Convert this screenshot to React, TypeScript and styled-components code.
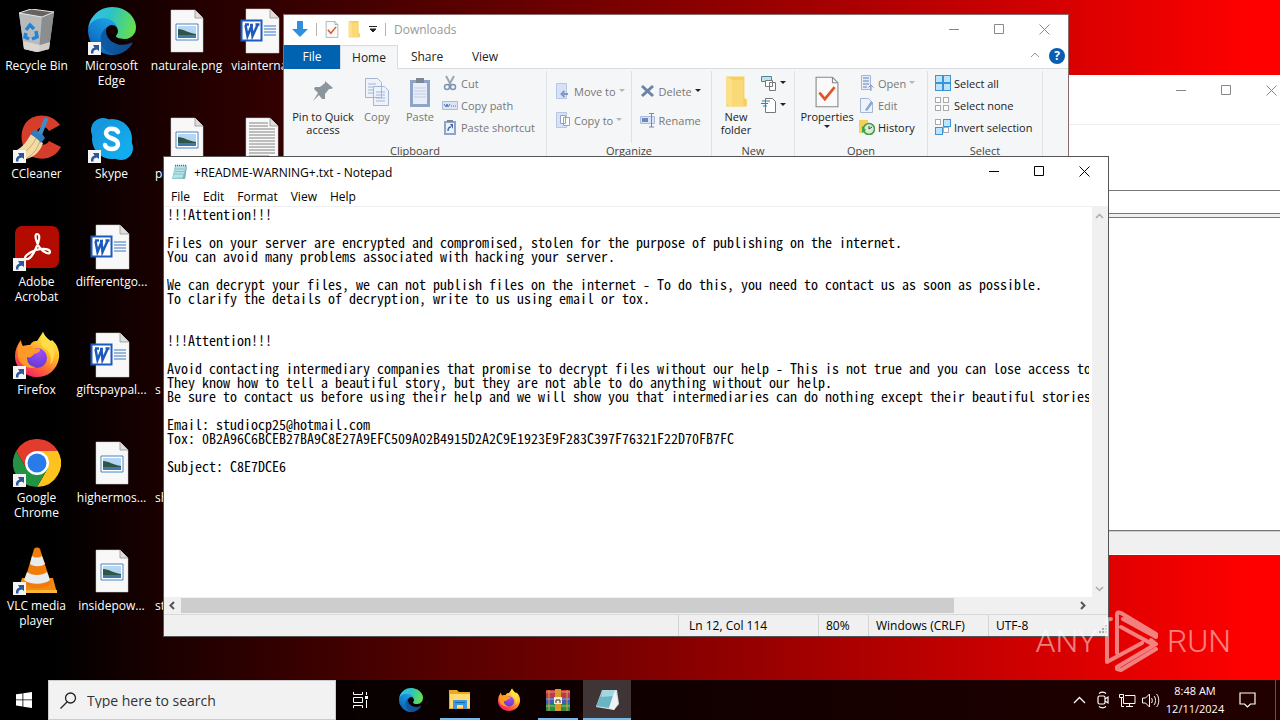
import React, { useId } from "react";
import styled, { createGlobalStyle } from "styled-components";

const ui = `"Open Sans", "Noto Sans", sans-serif`;

const Global = createGlobalStyle`
  * { box-sizing: border-box; }
  body { margin: 0; overflow: hidden; font: 12px/15px ${ui}; color: #000; }
  button, input, textarea { font: inherit; color: inherit; margin: 0; padding: 0; border: 0; background: none; border-radius: 0; outline: none; }
  svg { display: block; flex: none; }
`;

const Screen = styled.main`
  display: flex;
  flex-direction: column;
  height: 100vh;
  background: linear-gradient(90deg, #000 0, #000 4%, #1c0000 13%, #f00 98%);
`;
const Desktop = styled.section`
  position: relative;
  flex: 1;
  min-height: 0;
  overflow: hidden;
`;

/* ---------- desktop shortcuts ---------- */
const IconGrid = styled.div`
  display: grid;
  grid-auto-flow: column;
  grid-template-rows: repeat(6, 108px);
  grid-auto-columns: 75px;
  justify-content: start;
  margin-left: -1px;
  padding-top: 6px;
`;
const Shortcut = styled.button`
  display: flex;
  flex-direction: column;
  align-items: center;
  color: #fff;
  font-size: 12px;
  line-height: 15px;
  text-shadow: 0 1px 2px #000;
`;
const Picture = styled.span`
  position: relative;
  display: grid;
  place-items: center;
  width: 48px;
  height: 50px;
  margin-bottom: 2px;
`;
const Arrow = styled.svg`
  position: absolute;
  left: 0;
  bottom: 1px;
`;
const DocArt = styled.svg`
  overflow: visible;
`;
const Label = styled.span<{ $cut?: boolean }>`
  width: 75px;
  padding-left: ${(p) => (p.$cut ? 6 : 0)}px;
  text-align: ${(p) => (p.$cut ? "left" : "center")};
`;

/* ---------- windows ---------- */
const Frame = styled.article<{ $x: number; $y: number; $w: number; $h: number; $edge: string }>`
  position: absolute;
  left: ${(p) => p.$x}px;
  top: ${(p) => p.$y}px;
  width: ${(p) => p.$w}px;
  height: ${(p) => p.$h}px;
  display: flex;
  flex-direction: column;
  background: #fff;
  border: 1px solid ${(p) => p.$edge};
  overflow: hidden;
`;
const TitleBar = styled.header<{ $muted?: boolean }>`
  display: flex;
  align-items: center;
  height: 30px;
  flex: none;
  padding: 0 1px ${(p) => (p.$muted ? 2 : 0)}px 8px;
  gap: ${(p) => (p.$muted ? 8 : 6)}px;
  color: ${(p) => (p.$muted ? "#999" : "#000")};
`;
const WindowButtons = styled.div`
  display: flex;
  align-self: flex-start;
  margin-left: auto;
`;
const WindowButton = styled.button`
  display: grid;
  place-items: center;
  width: 45px;
  height: 29px;
`;

const QuickTools = styled.div`
  display: flex;
  align-items: center;
  gap: 8px;
`;
const Rule = styled.span`
  width: 1px;
  height: 13px;
  background: #b5b5b5;
`;
const Tabs = styled.nav`
  display: flex;
  height: 24px;
  flex: none;
  border-bottom: 1px solid #dadbdc;
`;
const Tab = styled.button<{ $kind?: "file" | "open" }>`
  width: ${(p) => (p.$kind === "file" ? 56 : 58)}px;
  height: 24px;
  color: ${(p) => (p.$kind === "file" ? "#fff" : "#222")};
  background: ${(p) => (p.$kind === "file" ? "#0063b1" : p.$kind === "open" ? "#f5f6f7" : "none")};
  border: ${(p) => (p.$kind === "open" ? "1px solid #dadbdc" : "0")};
  border-bottom: 0;
  line-height: 22px;
`;
const TabsEnd = styled.div`
  display: flex;
  align-items: center;
  gap: 9px;
  margin-left: auto;
  padding: 0 3px 2px 0;
`;
const Help = styled.button`
  width: 16px;
  height: 16px;
  border-radius: 8px;
  background: #0a5eb0;
  color: #fff;
  font-weight: 700;
  line-height: 16px;
`;
const Ribbon = styled.div`
  display: flex;
  flex: 1;
  background: #f5f6f7;
`;
const Group = styled.section<{ $w: number }>`
  display: flex;
  flex-direction: column;
  width: ${(p) => p.$w}px;
  height: 92px;
  margin-top: 2px;
  border-right: 1px solid #dfe2e5;
`;
const GroupBody = styled.div<{ $pad?: number; $gap?: number }>`
  display: flex;
  height: 72px;
  padding-left: ${(p) => p.$pad ?? 7}px;
  gap: ${(p) => p.$gap ?? 0}px;
`;
const GroupName = styled.div`
  text-align: center;
  font-size: 11px;
  color: #444;
`;
const BigTool = styled.button<{ $w: number; $off?: boolean }>`
  display: flex;
  flex-direction: column;
  align-items: center;
  width: ${(p) => p.$w}px;
  padding-top: 5px;
  gap: 2px;
  font-size: 11px;
  line-height: 13px;
  color: ${(p) => (p.$off ? "#777" : "#222")};
`;
const Stack = styled.div<{ $loose?: boolean; $line?: boolean }>`
  display: flex;
  flex-direction: column;
  padding: ${(p) => (p.$loose ? "9px 6px 0 8px" : "1px 0 0 1px")};
  gap: ${(p) => (p.$loose ? 7 : 0)}px;
  border-right: ${(p) => (p.$line ? "1px solid #dfe2e5" : "0")};
`;
const Tool = styled.button<{ $off?: boolean }>`
  display: flex;
  align-items: center;
  gap: 3px;
  height: 22px;
  font-size: 11px;
  white-space: nowrap;
  color: ${(p) => (p.$off ? "#777" : "#222")};
`;

/* background window */
const Strip = styled.div<{ $h: number; $line: string; $bg?: string }>`
  height: ${(p) => p.$h}px;
  flex: none;
  border-bottom: 1px solid ${(p) => p.$line};
  background: ${(p) => p.$bg ?? "#fff"};
`;
const Blank = styled.div`
  flex: 1;
  border-bottom: 1px solid #777;
`;
const Foot = styled.div`
  height: 23px;
  background: #f0f0f0;
  border-top: 1px solid #ccc;
`;

/* notepad */
const MenuBar = styled.nav`
  display: flex;
  height: 20px;
  flex: none;
  gap: 13px;
  padding-left: 7px;
  border-bottom: 1px solid #f0f0f0;
`;
const MenuItem = styled.button`
  font-size: 12px;
`;
const Editor = styled.div`
  display: grid;
  grid-template-columns: 1fr 16px;
  grid-template-rows: 1fr 17px;
  flex: 1;
  min-height: 0;
`;
const Page = styled.textarea`
  display: block;
  width: 100%;
  height: 100%;
  padding: 0;
  border: solid #fff;
  border-width: 0 3px;
  background: #fff;
  font: 14px/14px "Noto Sans Mono CJK SC", "Noto Sans Mono CJK JP", "DejaVu Sans Mono", monospace;
  resize: none;
  overflow: hidden;
  white-space: pre;
`;
const VBar = styled.div`
  display: flex;
  flex-direction: column;
  justify-content: space-between;
  align-items: center;
  padding: 5px 2px 4px 0;
  background: #f0f0f0;
`;
const HBar = styled.div`
  grid-column: 1 / -1;
  display: flex;
  align-items: center;
  background: #f0f0f0;
  padding: 0 21px 0 4px;
`;
const Track = styled.div`
  flex: 1;
  height: 15px;
  margin: 0 9px 0 4px;
`;
const Thumb = styled.div`
  width: 87%;
  height: 15px;
  background: #cdcdcd;
`;
const Status = styled.footer`
  display: flex;
  justify-content: flex-end;
  align-items: center;
  height: 22px;
  flex: none;
  background: #f0f0f0;
  border-top: 1px solid #d9d9d9;
`;
const Cell = styled.span<{ $w: number; $pad?: number }>`
  width: ${(p) => p.$w}px;
  padding-left: ${(p) => p.$pad ?? 7}px;
  border-left: 1px solid #d4d4d4;
  line-height: 21px;
`;
const Grip = styled.svg`
  align-self: flex-end;
`;

const Watermark = styled.div`
  position: absolute;
  right: 49px;
  bottom: 8px;
  display: flex;
  align-items: center;
  gap: 7px;
  opacity: 0.5;
  color: #fff;
  font: 300 32px/62px "Roboto", sans-serif;
`;

/* ---------- taskbar ---------- */
const Taskbar = styled.footer`
  display: flex;
  height: 40px;
  flex: none;
  background: rgba(0, 0, 0, 0.87);
  color: #fff;
`;
const TaskButton = styled.button<{ $on?: boolean; $running?: boolean }>`
  display: grid;
  place-items: center;
  width: 48px;
  background: ${(p) => (p.$running ? `linear-gradient(#76b9ed, #76b9ed) bottom / ${p.$on ? 48 : 40}px 2px no-repeat` : "none")};
  background-color: ${(p) => (p.$on ? "#3f3536" : "transparent")};
`;
const TaskList = styled.div`
  display: flex;
  gap: 1px;
  margin-left: 3px;
`;
const Search = styled.label`
  display: flex;
  align-items: center;
  gap: 10px;
  width: 288px;
  padding-left: 11px;
  background: #f2f2f2;
  border: 1px solid #ccc;
  color: #222;
`;
const SearchInput = styled.input`
  flex: 1;
  min-width: 0;
  font-size: 14px;
  &::placeholder { color: #333; opacity: 1; }
`;
const Tray = styled.div`
  display: flex;
  align-items: center;
  margin-left: auto;
`;
const TrayButton = styled.button<{ $wide?: boolean }>`
  display: grid;
  place-items: center;
  width: ${(p) => (p.$wide ? 40 : 24)}px;
  height: 40px;
  color: #fff;
`;
const Clock = styled.time`
  width: 64px;
  text-align: center;
  font-size: 11px;
  line-height: 18px;
  white-space: nowrap;
`;
const ShowDesktop = styled.button`
  width: 5px;
  height: 40px;
  margin-left: 8px;
  border-left: 1px solid #6b5050;
`;

/* ---------- drawings ---------- */
const ShortcutArrow = () => (
  <Arrow width="13" height="13" viewBox="0 0 13 13">
    <path d="M0 0h13v13H0z" fill="#f4f4f4" />
    <path d="M3 11.500C2.500 8 4 6 6.500 5.500L5 3h6v6L9 7.500C6 8 5 9 5.500 11.500z" fill="#2b579a" />
  </Arrow>
);

const EdgeIcon = ({ size = 48 }: { size?: number }) => {
  const id = useId();
  return (
    <svg width={size} height={size} viewBox="0 0 256 256">
      <defs>
        <linearGradient id={id + "a"} x1="0.2" y1="0.7" x2="1" y2="0.7">
          <stop stopColor="#0c59a4" /><stop offset="1" stopColor="#114a8b" />
        </linearGradient>
        <linearGradient id={id + "b"} x1="0.8" y1="0.2" x2="0.3" y2="1">
          <stop stopColor="#1b9de2" /><stop offset="0.5" stopColor="#1280d0" /><stop offset="1" stopColor="#0a5dab" />
        </linearGradient>
        <linearGradient id={id + "c"} x1="0" y1="0.3" x2="1" y2="0.5">
          <stop stopColor="#35c1f1" /><stop offset="0.45" stopColor="#2cc3c5" /><stop offset="1" stopColor="#66e04b" />
        </linearGradient>
      </defs>
      <g transform="translate(-4.630 -4.920)">
        <path fill={`url(#${id}a)`} d="M235.680 195.460a93.730 93.730 0 01-10.540 4.710 101.870 101.870 0 01-35.900 6.460c-47.320 0-88.540-32.550-88.540-74.320A31.480 31.480 0 01117.130 105c-42.800 1.800-53.800 46.400-53.800 72.530 0 73.880 68.090 81.370 82.760 81.370 7.910 0 19.840-2.300 27-4.560l1.310-.440a128.340 128.340 0 0066.600-52.800 4 4 0 00-5.320-5.640z" />
        <path fill={`url(#${id}b)`} d="M110.340 246.340A79.200 79.200 0 0187.600 225a80.720 80.720 0 0129.530-120c3.120-1.470 8.450-4.130 15.540-4a32.350 32.350 0 0125.690 13 31.880 31.880 0 016.360 18.660c0-.210 24.460-79.600-80-79.600-43.900 0-80 41.660-80 78.210a130.150 130.150 0 0012.110 56 128 128 0 00156.380 67.110 75.550 75.550 0 01-62.780-8z" />
        <path fill={`url(#${id}c)`} d="M156.940 153.780c-.810 1.050-3.300 2.500-3.300 5.660 0 2.610 1.700 5.120 4.720 7.230 14.380 10 41.490 8.680 41.560 8.680a59.560 59.560 0 0030.270-8.350A61.380 61.380 0 00260.600 114c.260-22.410-8-37.310-11.340-43.910C228.090 28.760 182.350 5 132.610 5a128 128 0 00-128 126.200c.480-36.540 36.800-66.050 80-66.050 3.500 0 23.460.340 42 10.070 16.340 8.580 24.900 18.940 30.850 29.210 6.180 10.670 7.280 24.150 7.280 29.520s-2.740 13.330-7.800 19.830z" />
      </g>
    </svg>
  );
};

const FirefoxIcon = ({ size = 48 }: { size?: number }) => {
  const id = useId();
  return (
    <svg width={size} height={size} viewBox="0 0 48 48">
      <defs>
        <linearGradient id={id + "f"} x1="0.85" y1="0.1" x2="0.25" y2="1">
          <stop stopColor="#fff04a" /><stop offset="0.35" stopColor="#ffb52b" /><stop offset="0.65" stopColor="#ff6a33" /><stop offset="1" stopColor="#f5156c" />
        </linearGradient>
        <radialGradient id={id + "o"} cx="0.6" cy="0.2" r="0.9">
          <stop stopColor="#a24bf5" /><stop offset="1" stopColor="#5b3ad0" />
        </radialGradient>
      </defs>
      <path fill={`url(#${id}f)`} d="M2 25C2 19 4 14 8 9c0 3 1 5 2 6 2-1 5-1 7-1 3-5 6-4 7-4l6-9c2 5 5 7 8 9l1-1c5 4 8 11 7 18-2 12-11 19-22 19S2 38 2 25z" />
      <circle cx="24" cy="27" r="10" fill={`url(#${id}o)`} />
      <path fill="#ff9a28" d="M8 10c0 3 1 5 2 6 4-2 8-1 11 1 3 1 6 0 6 2 0 3-5 3-7 5-1 2-4 3-6 2-1 6 4 10 9 10-8 3-16-2-18-10-1-6 0-11 3-16z" />
      <path fill="#ffe14a" d="M30 1c3 7 9 9 11 17 1 6 0 12-4 16 2-7 0-14-6-17-4-3-4-9-1-16z" opacity="0.8" />
    </svg>
  );
};

const ChromeIcon = () => (
  <svg width="48" height="48" viewBox="0 0 48 48">
    <path fill="#e33b2e" d="M3.200 12A24 24 0 0144.800 12H24L13.600 30z" />
    <path fill="#fcc31e" d="M44.800 12A24 24 0 0124 48L34.400 30 24 12z" />
    <path fill="#229342" d="M3.200 12 13.600 30H34.400L24 48A24 24 0 013.200 12z" />
    <circle cx="24" cy="24" r="12" fill="#fff" /><circle cx="24" cy="24" r="9.500" fill="#2a7bea" />
  </svg>
);

const RecycleBin = () => (
  <svg width="40" height="44" viewBox="0 0 40 44">
    <path d="M2 4 14 0l23 3-5 37-12 3-13-3z" fill="#a8a9ab" />
    <path d="M2 4 14 0l23 3-12 5z" fill="#67635f" />
    <path d="M2 4l23 4-3 35-3 0-12-3z" fill="#b8babc" />
    <path d="M25 8l12-5-5 37-10 3z" fill="#8c8d8f" />
    <path d="M6 32l17 4 10-3-1 7-12 3-13-3z" fill="#e2ddd6" opacity="0.8" />
    <path d="M2 4 14 0l23 3-12 5z" fill="none" stroke="#e4e4e4" />
    <g fill="none" stroke="#1e86d8" strokeWidth="3.500"><path d="M9 21l4-5 4 4M19 22l1 6-5 2M12 30l-4-2 1-4" /></g>
  </svg>
);

const Ccleaner = () => (
  <svg width="48" height="48" viewBox="0 0 48 48">
    <path d="M47 10C39-2 20-3 12 9c-7 11-3 28 8 33 11 4 22 1 28-10l-12-6c-3 5-9 5-12 0-3-6 0-13 5-14 4 0 5 1 7 4z" fill="#d63e2b" />
    <path d="M2 36c8-4 12-10 16-17l12 9c-2 7-8 14-17 16-5 0-9-3-11-8z" fill="#f3dba6" />
    <path d="M8 40c7-5 12-10 15-17M14 43c7-4 10-9 13-17" stroke="#c9a964" fill="none" />
    <path d="M17 19l5-4c4 1 8 4 10 8l-4 5c-3-4-7-7-11-9z" fill="#2f7cc0" /><path d="M25 18L31 4c1-3 5-1 4 1l-6 15z" fill="#3e8ccb" />
  </svg>
);

const SkypeIcon = () => (
  <svg width="44" height="44" viewBox="0 0 44 44">
    <defs><linearGradient id="sky" x1="0" y1="0" x2="1" y2="1"><stop stopColor="#1690d8" /><stop offset="1" stopColor="#12b4f4" /></linearGradient></defs>
    <g fill="url(#sky)"><circle cx="13" cy="13" r="12" /><circle cx="31" cy="31" r="12" /><circle cx="22" cy="22" r="20" /></g>
    <path d="M28 15c-2-4-12-5-12 1 0 7 12 4 12 11 0 7-12 6-13 1" stroke="#fff" strokeWidth="4.500" fill="none" strokeLinecap="round" />
  </svg>
);

const Acrobat = () => (
  <svg width="44" height="44" viewBox="0 0 44 44">
    <rect y="1" width="44" height="42" rx="7" fill="#b30b00" />
    <path d="M22 9c4 0 2 8-1 14-3 7-7 12-10 11s1-6 10-9c8-2 14-1 14 2 0 3-6 1-10-4s-6-14-3-14z" fill="none" stroke="#fff" strokeWidth="2.200" />
  </svg>
);

const VlcIcon = () => (
  <svg width="40" height="48" viewBox="0 0 40 48">
    <path d="M5 31h31l4 15H0z" fill="#f08a12" /><path d="M0 43h40v3H0z" fill="#ffb733" />
    <path d="M17 2c1-2 5-2 6 0l11 34c-5 7-22 7-27 0z" fill="#f07d0a" />
    <path d="M15 9c3 2 7 2 10 0l3 8c-4 3-11 3-15 0zM10 25c5 4 15 4 20 0l3 8c-6 5-20 5-26 0z" fill="#e9ecef" />
  </svg>
);

const Doc = ({ kind }: { kind: "png" | "word" | "txt" }) => (
  <DocArt width="40" height="44" viewBox={kind === "word" ? "2 0 40 44" : "1 0 40 44"}>
    <path d={kind === "word" ? "M6 0h24l9 9v35H6z" : "M5 1h24l8 8v34H5z"} fill="#f8f8f8" stroke="#ccc" strokeWidth="0.500" />
    <path d={kind === "word" ? "M30 0v9h9" : "M29 1v8h8"} fill="#ddd" stroke="#888" strokeWidth="0.700" />
    {kind === "png" && (
      <g>
        <path d="M10 15h22v16H10z" fill="#fff" stroke="#4a86bd" /><path d="M12 17h18v12H12z" fill="#b4d6f2" />
        <path d="M12 20c6 0 10 4 18 5v2H12z" fill="#2d5548" /><path d="M12 26h18v3H12z" fill="#4179ad" />
      </g>
    )}
    {kind === "txt" && <path d="M8 6h19M8 9h19M8 12h26M8 15h26M8 18h26M8 21h26M8 24h26M8 27h26M8 30h26M8 33h26M8 36h26M8 39h20" stroke="#777" strokeWidth="0.900" />}
    {kind === "word" && (
      <g>
        <path d="M24 17h12M24 20h12M24 23h12M24 26h12" stroke="#3a76c4" strokeWidth="1.200" />
        <path d="M1.500 11.500h20v20h-20z" fill="#fff" stroke="#1c5bbd" strokeWidth="2" />
        <path d="M5 15.500h4M5.500 16l2 11 4-10 1 10 5-11M10 16h3M15.500 15.500h4" stroke="#1c5bbd" strokeWidth="2.500" fill="none" />
      </g>
    )}
  </DocArt>
);

const NotepadIcon = ({ size = 16 }: { size?: number }) => (
  <svg width={size} height={size} viewBox="0 0 16 16">
    <path d="M3 1.500h12l-2 13.500H0z" fill="#8ecbd3" /><path d="M4 2h9l-2 11-10 1z" fill="#b9e3e8" />
    <path d="M3 5h9M3 7.500h9M2 10h9" stroke="#71b3bd" strokeWidth="0.700" /><path d="M3 1.500h12" stroke="#666" strokeDasharray="1 1" strokeWidth="1.500" />
    <path d="M15 2l-2 13h-3z" fill="#7fb3bd" />
  </svg>
);
const NotepadLarge = () => (
  <svg width="24" height="24" viewBox="0 0 24 24">
    <path d="M7 2h15l2 14-5 6-18-3z" fill="#d8dfe2" /><path d="M8 2h12l-6 18-13-2z" fill="#69b5c3" /><path d="M8 2h12l-2 6-12 1z" fill="#a2d7df" />
    <path d="M20 2l3 13-4 7-5-2z" fill="#eef3f4" />
  </svg>
);

const Controls = ({ color }: { color: string }) => (
  <WindowButtons>
    <WindowButton aria-label="Minimize"><svg width="11" height="11"><path d="M0 5.500h10" stroke={color} /></svg></WindowButton>
    <WindowButton aria-label="Maximize"><svg width="11" height="11"><path d="M.500.500h9v9h-9z" fill="none" stroke={color} /></svg></WindowButton>
    <WindowButton aria-label="Close"><svg width="11" height="11"><path d="M.500.500l10 10M10.500.500l-10 10" stroke={color} /></svg></WindowButton>
  </WindowButtons>
);

const Caret = ({ off }: { off?: boolean }) => <svg width="6" height="4"><path d="M0 0h6L3 3z" fill={off ? "#b5b5b5" : "#222"} /></svg>;
const Chevron = ({ d, c = "#555", w = 2 }: { d: string; c?: string; w?: number }) => <svg width="9" height="9" viewBox="0 0 9 9"><path d={d} fill="none" stroke={c} strokeWidth={w} /></svg>;

const PropsIcon = ({ w, h }: { w: number; h: number }) => (
  <svg width={w} height={h} viewBox="0 0 22 29"><path d="M1 1h15l5 5v22H1z" fill="#fafafa" stroke="#888" /><path d="M16 1v5h5" fill="none" stroke="#888" /><path d="M4 15l5 6 9-11" fill="none" stroke="#e2552c" strokeWidth="2.500" /></svg>
);
const FolderIcon = ({ w, h }: { w: number; h: number }) => (
  <svg width={w} height={h} viewBox="0 0 20 26"><path d="M2 0h15v18l2 1v6H2z" fill="#f7cf5c" /><path d="M2 0l5 3v23l-5-3z" fill="#fde08a" /><path d="M7 3h9v22H7z" fill="#fad978" /></svg>
);
const PinIcon = () => <svg width="24" height="32" viewBox="0 0 24 32"><path d="M14 5l8 7-2 1-2 0-4 5 0 5-3 0-3-4-6 6 5-8-4-4 1-2 5 0 5-4z" fill="#8b959c" /></svg>;
const CopyIcon = () => (
  <svg width="26" height="32" viewBox="0 0 26 32"><g fill="#edf2fb" stroke="#a5b5d3"><path d="M1.500 2.500h12l4 4v15h-16zM9.500 10.500h11l4 4v15h-15z" /><path d="M4 8h8M4 11h5M4 14h5M4 17h5M12 16h9M12 19h9M12 22h9M12 25h9" /></g></svg>
);
const PasteIcon = () => <svg width="22" height="32" viewBox="0 0 22 32"><path d="M1 4h20v27H1z" fill="#8fa5c8" /><path d="M4 7h14v21H4z" fill="#e8eef9" /><path d="M7 2h8v5H7z" fill="#7b8794" /><path d="M5 12h12M5 15h12M5 18h12M5 21h12" stroke="#c0cde4" /></svg>;
const Small = ({ children }: { children: React.ReactNode }) => <svg width="16" height="16" viewBox="0 0 16 16">{children}</svg>;
const SelectIcon = ({ fill }: { fill: number[] }) => (
  <Small>{[[0, 0], [8, 0], [0, 8], [8, 8]].map(([x, y], i) => <rect key={i} x={x + 0.5} y={y + 0.5} width={fill[i] ? 7 : 5} height={fill[i] ? 7 : 5} fill={fill[i] ? "#bfe3fa" : "#fff"} stroke={fill[i] ? "#3a95d6" : "#aaa"} />)}</Small>
);

type Item = { name: string; icon: React.ReactNode; link?: boolean; cut?: boolean };
const items: Item[] = [
  { name: "Recycle Bin", icon: <RecycleBin /> },
  { name: "CCleaner", icon: <Ccleaner />, link: true },
  { name: "Adobe Acrobat", icon: <Acrobat />, link: true },
  { name: "Firefox", icon: <FirefoxIcon />, link: true },
  { name: "Google Chrome", icon: <ChromeIcon />, link: true },
  { name: "VLC media player", icon: <VlcIcon />, link: true },
  { name: "Microsoft Edge", icon: <EdgeIcon />, link: true },
  { name: "Skype", icon: <SkypeIcon />, link: true },
  { name: "differentgo...", icon: <Doc kind="word" /> },
  { name: "giftspaypal...", icon: <Doc kind="word" /> },
  { name: "highermos...", icon: <Doc kind="png" /> },
  { name: "insidepow...", icon: <Doc kind="png" /> },
  { name: "naturale.png", icon: <Doc kind="png" /> },
  { name: "pl", icon: <Doc kind="png" />, cut: true },
  { name: "", icon: <Doc kind="png" /> },
  { name: " s", icon: <Doc kind="png" />, cut: true },
  { name: "sh", icon: <Doc kind="png" />, cut: true },
  { name: "st", icon: <Doc kind="png" />, cut: true },
  { name: "viainternat", icon: <Doc kind="word" /> },
  { name: "", icon: <Doc kind="txt" /> },
];

const note = `!!!Attention!!!

Files on your server are encrypted and compromised, stolen for the purpose of publishing on the internet.
You can avoid many problems associated with hacking your server.

We can decrypt your files, we can not publish files on the internet - To do this, you need to contact us as soon as possible.
To clarify the details of decryption, write to us using email or tox.


!!!Attention!!!

Avoid contacting intermediary companies that promise to decrypt files without our help - This is not true and you can lose access to
They know how to tell a beautiful story, but they are not able to do anything without our help.
Be sure to contact us before using their help and we will show you that intermediaries can do nothing except their beautiful stories

Email: studiocp25@hotmail.com
Tox: 0B2A96C6BCEB27BA9C8E27A9EFC509A02B4915D2A2C9E1923E9F283C397F76321F22D70FB7FC

Subject: C8E7DCE6`;

const Explorer = () => (
  <Frame $x={283} $y={14} $w={786} $h={300} $edge="#8a6a6a">
    <TitleBar $muted>
      <QuickTools>
        <svg width="16" height="18" viewBox="0 0 16 18"><path d="M5 1h6v8h5l-8 8-8-8h5z" fill="#2f8fdc" /></svg>
        <Rule /><PropsIcon w={14} h={17} /><FolderIcon w={14} h={17} />
        <svg width="8" height="8"><path d="M0 1.500h8M1 4h6L4 7z" stroke="#222" fill="#222" strokeWidth="1" /></svg>
        <Rule />
      </QuickTools>
      <span>Downloads</span>
      <Controls color="#888" />
    </TitleBar>
    <Tabs>
      <Tab $kind="file">File</Tab><Tab $kind="open">Home</Tab><Tab>Share</Tab><Tab>View</Tab>
      <TabsEnd><Chevron d="M0 6l4-4 4 4" c="#999" w={1} /><Help>?</Help></TabsEnd>
    </Tabs>
    <Ribbon>
      <Group $w={263}>
        <GroupBody>
          <BigTool $w={64}><PinIcon />Pin to Quick access</BigTool>
          <BigTool $w={44} $off><CopyIcon />Copy</BigTool>
          <BigTool $w={42} $off><PasteIcon />Paste</BigTool>
          <Stack>
            <Tool $off><Small><path d="M4 1l5 9M12 1l-5 9" stroke="#9aa6b2" strokeWidth="2" /><circle cx="5" cy="12" r="2.500" fill="none" stroke="#7f93b5" strokeWidth="1.500" /><circle cx="11" cy="12" r="2.500" fill="none" stroke="#7f93b5" strokeWidth="1.500" /></Small>Cut</Tool>
            <Tool $off><Small><path d="M.500 4.500h15v8H.500z" fill="#dbe5f5" stroke="#a9badb" /><path d="M2 7l2 3 1-3 1 3 2-3M9 9h1M11 9h1M13 9h1" stroke="#5875ac" fill="none" /></Small>Copy path</Tool>
            <Tool $off><Small><path d="M2 2h12v14H2z" fill="#8fa5c8" /><path d="M4 4h8v10H4z" fill="#eef3fb" /><path d="M5 1h6v2H5z" fill="#7b8794" /><path d="M6 12c0-3 1-4 3-4" stroke="#4569a8" strokeWidth="1.500" fill="none" /><path d="M8 5h3v5z" fill="#4569a8" /></Small>Paste shortcut</Tool>
          </Stack>
        </GroupBody>
        <GroupName>Clipboard</GroupName>
      </Group>
      <Group $w={165}>
        <GroupBody $pad={0}>
          <Stack $loose $line>
            <Tool $off><Small><path d="M1.500.500h10v15h-10z" fill="#d7e2f5" stroke="#b7c6e2" /><path d="M13 11H7M9.500 8l-3 3 3 3" stroke="#7f98c8" strokeWidth="2" fill="none" /></Small>Move to <Caret off /></Tool>
            <Tool $off><Small><path d="M1.500.500h10v15h-10z" fill="#d7e2f5" stroke="#b7c6e2" /><path d="M5.500 3.500h5v8h-5zM8.500 5.500h6v8h-6z" fill="#fff" stroke="#8ca2cd" /></Small>Copy to <Caret off /></Tool>
          </Stack>
          <Stack $loose>
            <Tool $off><Small><path d="M2 3l11 10M13 3L2 13" stroke="#6b83a6" strokeWidth="3" /></Small>Delete <Caret /></Tool>
            <Tool $off><Small><path d="M.500 4.500h14v7H.500z" fill="#dbe5f5" stroke="#a9badb" /><path d="M2 6h6v4H2z" fill="#6c88bf" /><path d="M9 1.500h5M11.500 2v13M9 15h5" stroke="#6c88bf" /></Small>Rename</Tool>
          </Stack>
        </GroupBody>
        <GroupName>Organize</GroupName>
      </Group>
      <Group $w={83}>
        <GroupBody $pad={4} $gap={4}>
          <BigTool $w={40}><FolderIcon w={24} h={32} />New folder</BigTool>
          <Stack>
            <Tool aria-label="New item"><Small><path d="M.500 1.500h10v5h-10z" fill="#bfe3ee" stroke="#4d8795" /><path d="M4.500 5.500h7v6h-7zM8.500 7.500h6v8h-6z" fill="#fff" stroke="#777" /></Small><Caret /></Tool>
            <Tool aria-label="Easy access"><Small><path d="M4.500 1.500h7l3 3v11h-10z" fill="#fff" stroke="#777" /><path d="M1 4h8M0 6.500h7M2 9h4" stroke="#2387b5" /></Small><Caret /></Tool>
          </Stack>
        </GroupBody>
        <GroupName>New</GroupName>
      </Group>
      <Group $w={133}>
        <GroupBody $pad={3} $gap={2}>
          <BigTool $w={58}><PropsIcon w={24} h={32} />Properties<Caret /></BigTool>
          <Stack>
            <Tool $off><Small><path d="M2.500.500h9v14h-9z" fill="#e8eef9" stroke="#a5b5d3" /><path d="M4 3h6M4 6h6M4 9h6M4 12h4" stroke="#8fa5cf" strokeWidth="1.500" /><path d="M12 16v-6M9.500 12.500L12 10l2.500 2.500" stroke="#8295bb" fill="none" /></Small>Open <Caret off /></Tool>
            <Tool $off><Small><path d="M1.500 1.500h8l4 4v10h-12z" fill="#eef3fb" stroke="#a5b5d3" /><path d="M6 13l6-9 2 2-6 8z" fill="#8fa5cf" /></Small>Edit</Tool>
            <Tool><Small><path d="M0 1h9v13H0z" fill="#f6cf58" /><circle cx="10" cy="10" r="5.500" fill="#d7ecd4" stroke="#3f9b47" strokeWidth="1.500" /><path d="M10 7v3l3-2" stroke="#444" fill="none" /><path d="M3 7v7l4-3z" fill="#3aa544" /></Small>History</Tool>
          </Stack>
        </GroupBody>
        <GroupName>Open</GroupName>
      </Group>
      <Group $w={115}>
        <GroupBody $pad={6}>
          <Stack>
            <Tool><SelectIcon fill={[1, 1, 1, 1]} />Select all</Tool>
            <Tool><SelectIcon fill={[0, 0, 0, 0]} />Select none</Tool>
            <Tool><SelectIcon fill={[0, 1, 1, 0]} />Invert selection</Tool>
          </Stack>
        </GroupBody>
        <GroupName>Select</GroupName>
      </Group>
    </Ribbon>
  </Frame>
);

const Notepad = () => (
  <Frame $x={163} $y={156} $w={946} $h={481} $edge="#555">
    <TitleBar>
      <NotepadIcon />
      <span>+README-WARNING+.txt - Notepad</span>
      <Controls color="#000" />
    </TitleBar>
    <MenuBar>
      {["File", "Edit", "Format", "View", "Help"].map((m) => <MenuItem key={m}>{m}</MenuItem>)}
    </MenuBar>
    <Editor>
      <Page aria-label="Document text" readOnly wrap="off" spellCheck={false} defaultValue={note} />
      <VBar><Chevron d="M1 6l3.500-3.500L8 6" c="#aaa" w={1.5} /><Chevron d="M1 3l3.500 3.500L8 3" c="#aaa" w={1.5} /></VBar>
      <HBar><Chevron d="M6 1L2.500 4.500 6 8" /><Track><Thumb /></Track><Chevron d="M3 1l3.500 3.500L3 8" /></HBar>
    </Editor>
    <Status>
      <Cell $w={140} $pad={10}>Ln 12, Col 114</Cell>
      <Cell $w={50}>80%</Cell>
      <Cell $w={120}>Windows (CRLF)</Cell>
      <Cell $w={109}>UTF-8</Cell>
      <Grip width="11" height="11"><path d="M8 1h2M5 4h2M8 4h2M2 7h2M5 7h2M8 7h2" stroke="#aaa" strokeWidth="2" /></Grip>
    </Status>
  </Frame>
);

export default function App() {
  return (
    <Screen>
      <Global />
      <Desktop>
        <IconGrid>
          {items.map((it, i) => (
            <Shortcut key={i}>
              <Picture>{it.icon}{it.link && <ShortcutArrow />}</Picture>
              <Label $cut={it.cut}>{it.name}</Label>
            </Shortcut>
          ))}
        </IconGrid>
        <Frame $x={900} $y={75} $w={396} $h={480} $edge="#fff">
          <TitleBar $muted><Controls color="#888" /></TitleBar>
          <Strip $h={19} $line="#eee" />
          <Strip $h={66} $line="#777" />
          <Strip $h={23} $line="#777" />
          <Strip $h={4} $line="#777" $bg="#f0f0f0" />
          <Blank />
          <Foot />
        </Frame>
        <Explorer />
        <Notepad />
        <Watermark>
          <span>ANY</span>
          <svg width="56" height="62" viewBox="0 0 56 62" fill="none" stroke="#fff" strokeWidth="4" strokeLinejoin="round" strokeLinecap="round">
            <path d="M7 9c-4 0-4 2-4 5v38l35-19M13 43V5c0-3 2-3 4-2l35 21v3L19 9M13 57l39-23-5-4M13 57v2l4 1 35-21M17 17l33 18" />
          </svg>
          <span>RUN</span>
        </Watermark>
      </Desktop>
      <Taskbar>
        <TaskButton aria-label="Start"><svg width="16" height="16" viewBox="0 0 16 16"><path d="M0 2.300l6.500-.900v6.100H0zM7.300 1.300L16 0v7.500H7.300zM0 8.300h6.500v6.200L0 13.600zM7.300 8.300H16V16l-8.700-1.200z" fill="#fff" /></svg></TaskButton>
        <Search>
          <svg width="17" height="17" viewBox="0 0 17 17"><circle cx="10.500" cy="6" r="5" fill="none" stroke="#222" strokeWidth="1.300" /><path d="M7 10L.500 16.500" stroke="#222" strokeWidth="1.300" /></svg>
          <SearchInput aria-label="Search" placeholder="Type here to search" />
        </Search>
        <TaskButton aria-label="Task View"><svg width="17" height="16" viewBox="0 0 17 16" fill="none" stroke="#fff"><path d="M1.500 0v2.500h9V0M1.500 5.500h9v5h-9zM1.500 16v-2.500h9V16M14.500 0v3M14.500 8v8" /><path d="M13 4h3v3h-3z" fill="#fff" stroke="none" /></svg></TaskButton>
        <TaskList>
          <TaskButton aria-label="Microsoft Edge"><EdgeIcon size={24} /></TaskButton>
          <TaskButton aria-label="File Explorer" $running><svg width="22" height="20" viewBox="0 0 22 20"><path d="M0 0h8l2 2h11v17H0z" fill="#e8a91c" /><path d="M1 4h20v14H1z" fill="#ffdb72" /><path d="M4 19v-9h14v9h-4v-4H8v4z" fill="#3c9be0" /><path d="M6 12h10v1H6z" fill="#1769a8" /></svg></TaskButton>
          <TaskButton aria-label="Firefox"><FirefoxIcon size={24} /></TaskButton>
          <TaskButton aria-label="WinRAR" $running><svg width="24" height="23" viewBox="0 0 24 23"><path d="M0 1h24v7H0z" fill="#c23a45" /><path d="M0 8h24v7H0z" fill="#4559b8" /><path d="M0 15h24v7H0z" fill="#2c8a44" /><path d="M0 3h24M0 10h24M0 17h24" stroke="#eee" opacity="0.500" /><path d="M9 0h6v22H9z" fill="#d79a2b" /><path d="M8 8h8v7H8z" fill="#f6edd0" /><path d="M10 14v-3h4v3" stroke="#333" fill="none" /><path d="M3 1v21M21 1v21" stroke="#d9a53a" /></svg></TaskButton>
          <TaskButton aria-label="Notepad" $on $running><NotepadLarge /></TaskButton>
        </TaskList>
        <Tray>
          <TrayButton aria-label="Show hidden icons"><svg width="13" height="8" fill="none" stroke="#fff" strokeWidth="1.300"><path d="M1 7l5.500-5.500L12 7" /></svg></TrayButton>
          <TrayButton aria-label="Meet Now"><svg width="16" height="18" viewBox="0 0 16 18" fill="none" stroke="#fff" strokeWidth="1.200"><rect x="3" y="5" width="7" height="8" rx="1.500" /><path d="M10 8l3-2v6l-3-2M4 2.500c2-1.500 5-1.500 7 0M4 15.500c2 1.500 5 1.500 7 0" /></svg></TrayButton>
          <TrayButton aria-label="Network"><svg width="17" height="15" viewBox="0 0 17 15" fill="none" stroke="#fff"><path d="M6 2.500h10v8H4.500V5M7 13.500h7M10.500 11v3M.500 1.500h4v3h-4zM2.500 5v8.500H5" /></svg></TrayButton>
          <TrayButton aria-label="Volume"><svg width="18" height="15" viewBox="0 0 18 15" fill="none" stroke="#fff"><path d="M.500 5h3l4-4v13l-4-4h-3zM9.500 5c1 1 1 4 0 5M12 3c2 2 2 7 0 9M14.500 1c3 3 3 10 0 13" /></svg></TrayButton>
          <Clock>8:48 AM<br />12/11/2024</Clock>
          <TrayButton aria-label="Notifications" $wide><svg width="29" height="17" viewBox="0 0 29 17" fill="none" stroke="#fff" strokeWidth="1.200"><path d="M7 1h15v11h-4.500l-3 3-3-3H7z" /></svg></TrayButton>
          <ShowDesktop aria-label="Show desktop" />
        </Tray>
      </Taskbar>
    </Screen>
  );
}
